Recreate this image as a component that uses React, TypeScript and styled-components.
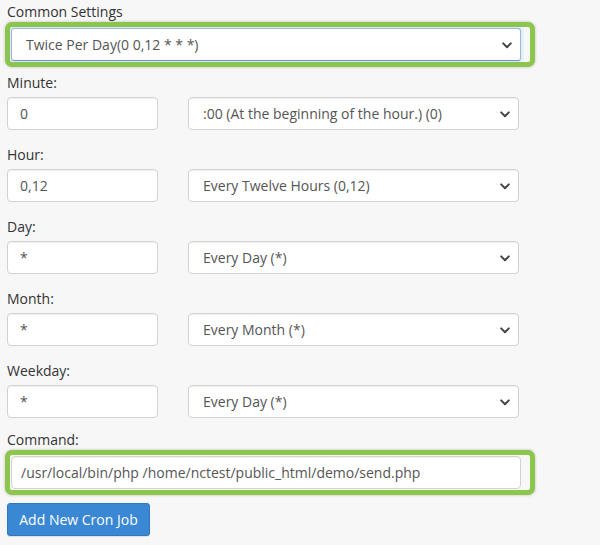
import { FC } from "react";
import styled, { createGlobalStyle } from "styled-components";

const GlobalStyle = createGlobalStyle`
    html, body {
        margin: 0;
        padding: 0;
        background: #f7f7f7;
    }
    body {
        font-family: "Open Sans", "Liberation Sans", sans-serif;
        font-size: 14px;
        color: #333;
    }
`;

const fields = [
    { label: "Minute:", value: "0", option: ":00 (At the beginning of the hour.) (0)" },
    { label: "Hour:", value: "0,12", option: "Every Twelve Hours (0,12)" },
    { label: "Day:", value: "*", option: "Every Day (*)" },
    { label: "Month:", value: "*", option: "Every Month (*)" },
    { label: "Weekday:", value: "*", option: "Every Day (*)" },
];

const Chevron: FC = () => (
    <ChevronIcon width="10" height="7" viewBox="0 0 10 7">
        <path d="M1.2 1.4 L5 5.2 L8.8 1.4" fill="none" stroke="#444" strokeWidth="2" strokeLinecap="round" strokeLinejoin="round" />
    </ChevronIcon>
);

const Select: FC<{ text: string; focused?: boolean }> = ({ text, focused }) => (
    <SelectBox $focused={focused}>
        <span>{text}</span>
        <Chevron />
    </SelectBox>
);

const App = () => {
    return (
        <>
            <GlobalStyle />
            <Page>
                <Label>Common Settings</Label>
                <Highlight>
                    <Select text="Twice Per Day(0 0,12 * * *)" focused />
                </Highlight>

                {fields.map((f, i) => (
                    <Group key={f.label} $top={i === 0 ? 6 : 15}>
                        <Label $gap={4}>{f.label}</Label>
                        <Row>
                            <TextBox>{f.value}</TextBox>
                            <Select text={f.option} />
                        </Row>
                    </Group>
                ))}

                <Group $top={12}>
                    <Label>Command:</Label>
                    <Highlight>
                        <TextBox $wide>/usr/local/bin/php /home/nctest/public_html/demo/send.php</TextBox>
                    </Highlight>
                </Group>

                <Button>Add New Cron Job</Button>
            </Page>
        </>
    );
};

export default App;

const Page = styled.div`
    width: 600px;
    height: 545px;
    padding: 2px 0 0 7px;
    box-sizing: border-box;
    overflow: hidden;
`;

const Label = styled.div<{ $gap?: number }>`
    height: 20px;
    line-height: 20px;
    font-size: 14px;
    color: #333;
    margin-bottom: ${({ $gap }) => $gap ?? 0}px;
`;

const Group = styled.div<{ $top: number }>`
    margin-top: ${({ $top }) => $top}px;
`;

const Row = styled.div`
    display: grid;
    grid-template-columns: 151px 331px;
    column-gap: 30px;
`;

const Highlight = styled.div`
    width: 530px;
    margin-left: -2px;
    margin-top: 0;
    box-sizing: border-box;
    border: 5px solid #8cc64a;
    border-radius: 7px;
    padding: 1px 9px 1px 1px;
    box-shadow: 0 0 3px rgba(0, 0, 0, 0.25);
    background: #f7f7f7;
`;

const Control = styled.div`
    height: 33px;
    box-sizing: border-box;
    background: #fff;
    border: 1px solid #d2d2d2;
    border-radius: 4px;
    box-shadow: inset 0 1px 1px rgba(0, 0, 0, 0.06);
    color: #555;
    font-size: 14px;
    line-height: 31px;
    white-space: nowrap;
    overflow: hidden;
`;

const TextBox = styled(Control)<{ $wide?: boolean }>`
    padding-left: ${({ $wide }) => ($wide ? "9px" : "12px")};
`;

const SelectBox = styled(Control)<{ $focused?: boolean }>`
    position: relative;
    padding-left: 14px;
    ${({ $focused }) =>
        $focused &&
        `
        border-color: #9db8d8;
        border-bottom-color: #6f93bf;
        box-shadow: 0 0 4px rgba(102, 175, 233, 0.45);
        border-radius: 3px;
    `}
`;

const ChevronIcon = styled.svg`
    position: absolute;
    right: 8px;
    top: 13px;
`;

const Button = styled.button`
    display: block;
    margin-top: 8px;
    width: 143px;
    height: 33px;
    padding: 0;
    background: #3a87d3;
    border: 1px solid #2f78c0;
    border-radius: 3px;
    color: #fff;
    font-family: "Open Sans", "Liberation Sans", sans-serif;
    font-size: 14px;
    box-shadow: 0 1px 1px rgba(0, 0, 0, 0.1);
`;
